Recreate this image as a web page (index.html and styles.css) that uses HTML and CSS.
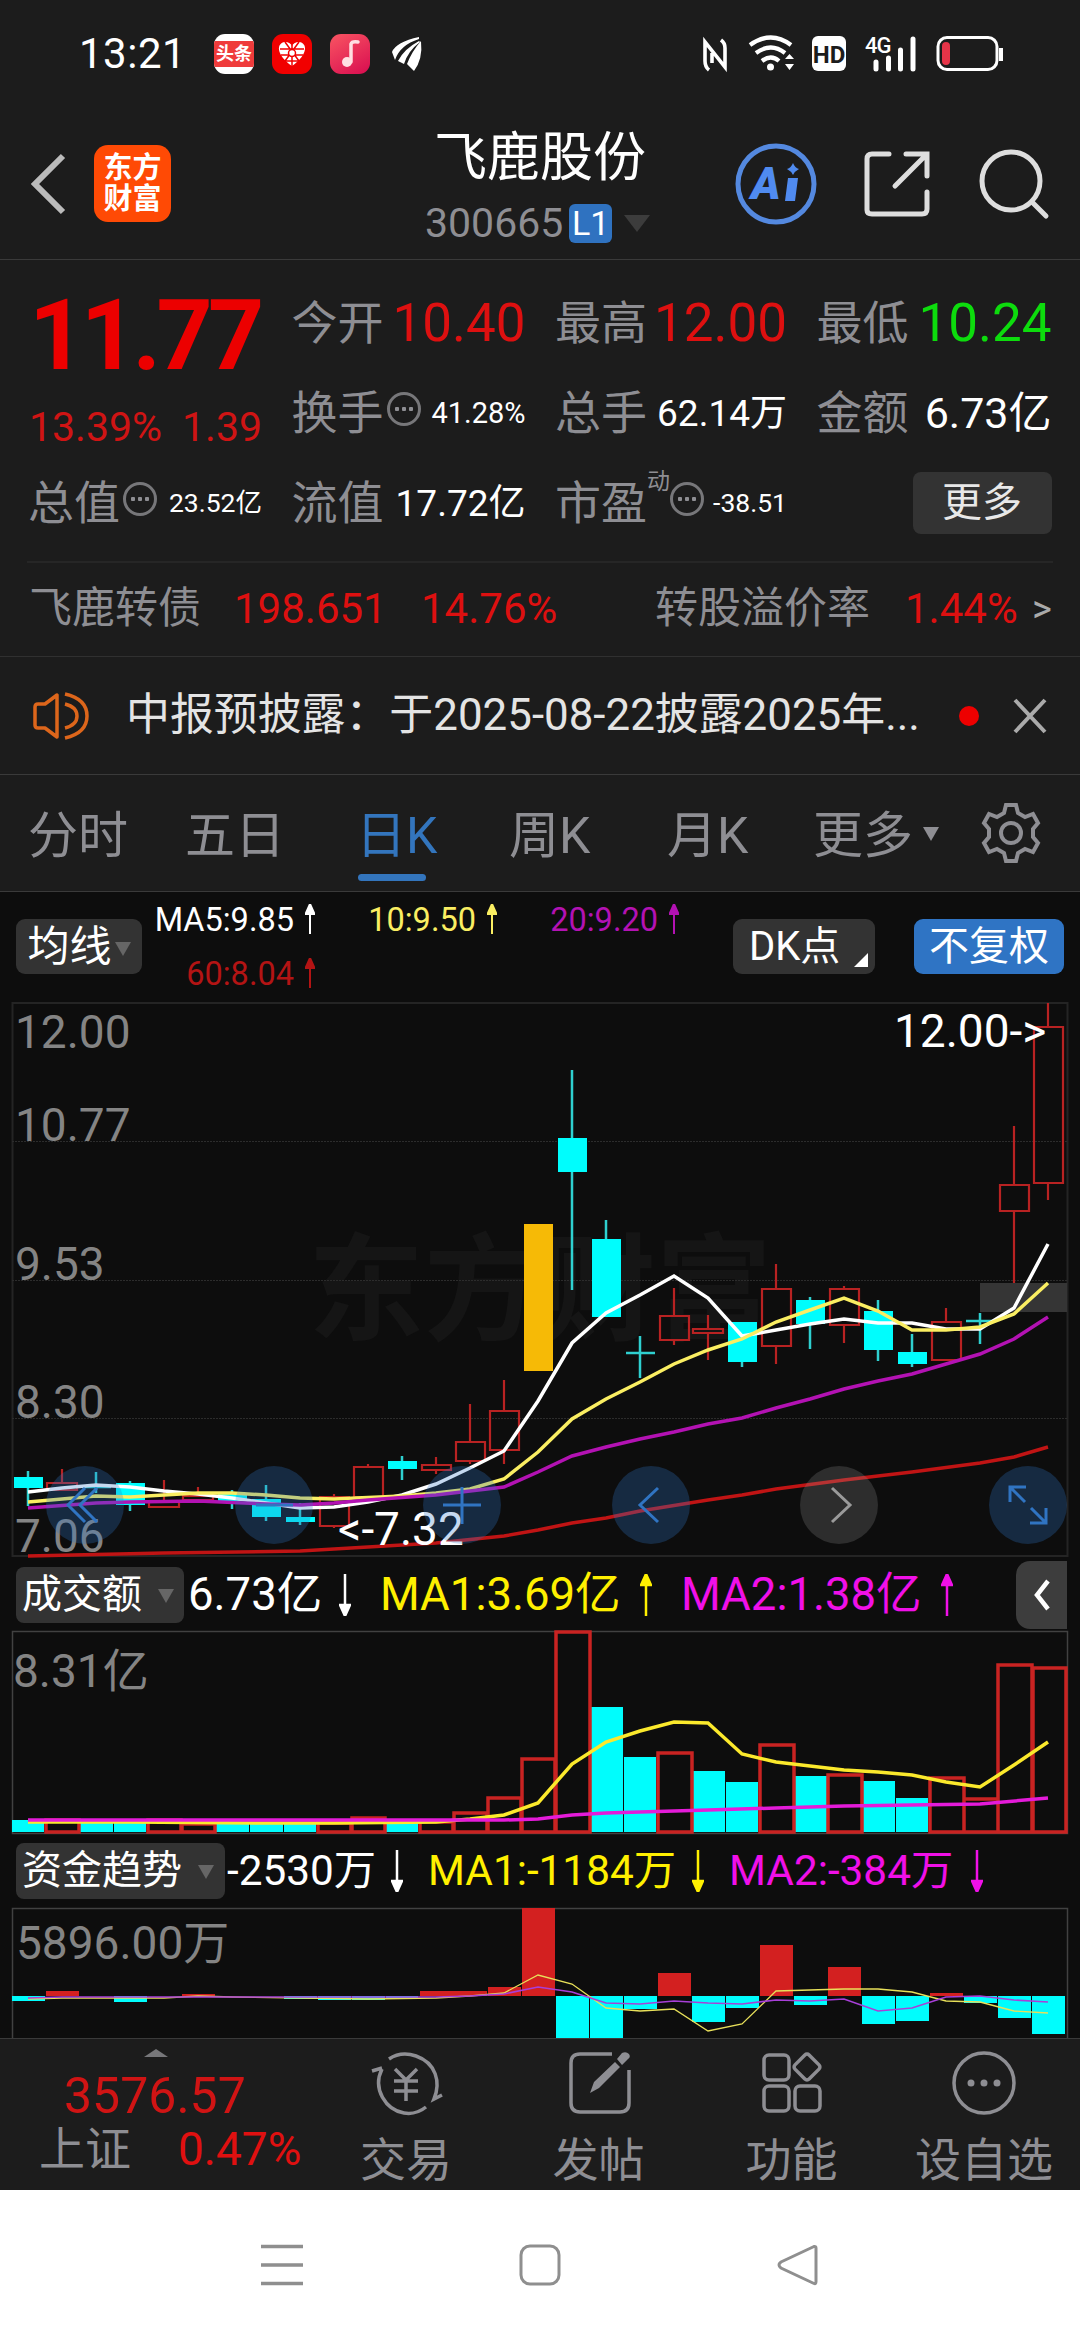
FILE: index.html
```html
<!DOCTYPE html>
<html lang="zh-CN">
<head>
<meta charset="utf-8">
<meta name="viewport" content="width=1080">
<title>飞鹿股份 300665</title>
<link rel="stylesheet" href="styles.css">
</head>
<body>
<div class="status">
<span class="clock">13:21</span>
<span class="app toutiao"><b>头条</b></span>
<span class="app heart"><svg width="40" height="40" viewBox="0 0 40 40"><path d="M20 32C4 21 4 9 13 8q5 0 7 4 2-4 7-4c9 1 9 13-7 24z" fill="#fff"/><path d="M8 15h24M9 21h22M13 8l14 19M27 8L13 27M20 11v21M14 27h12" stroke="#f10000" stroke-width="1.5" fill="none"/><circle cx="20" cy="19" r="3.5" fill="#fff" stroke="#f10000" stroke-width="1.5"/></svg></span>
<span class="app music"><svg width="40" height="40" viewBox="0 0 40 40"><path d="M21 28V10q1-3 7-2" fill="none" stroke="#ffdfe2" stroke-width="3.5" stroke-linecap="round"/><ellipse cx="17" cy="28" rx="5" ry="5" fill="#ffdfe2"/></svg></span>
<svg class="bird" width="32" height="34" viewBox="0 0 32 34"><path d="M27 0Q4 5 0 15l3 8Q8 8 27 2zM27 4Q12 12 6 24l6 3Q16 14 28 5zM29 4Q20 14 15 27l7 7Q31 22 29 4z" fill="#fff"/></svg>
<svg class="signals" width="300" height="36" viewBox="0 0 300 36" fill="none">
<path d="M9 34Q5 31 5 25V6l20 25V12q0-5-4-8M12 27V17" stroke="#fff" stroke-width="3.6"/>
<g stroke="#fff" stroke-width="4.3"><path d="M50 9q21-15 41 0M56 17q15-11 29 0M62 25q9-7 17 0"/></g>
<circle cx="70.500" cy="31" r="3.500" fill="#fff"/><path d="M85 23l4.500-5 4.500 5zM85 28l4.500 6 4.500-6z" fill="#fff"/>
<rect x="112" y="0" width="34" height="35" rx="6" fill="#fff"/><text class="hd" x="129" y="27" text-anchor="middle">HD</text>
<text class="fourg" x="165" y="17">4G</text>
<path d="M176 26v7M188.500 22v11M200.500 14v19M213 3v30" stroke="#fff" stroke-width="5" stroke-linecap="round"/>
<rect x="238" y="1.500" width="59" height="32" rx="9" stroke="#fff" stroke-width="3"/>
<rect x="242" y="6" width="8" height="23" rx="4" fill="#e63448"/>
</svg><i class="cap"></i>
</div>

<header>
<svg class="back" width="38" height="64" viewBox="0 0 38 64"><path d="M34 4L6 32l28 28" fill="none" stroke="#bbb" stroke-width="6"/></svg>
<div class="logo">东方<br>财富</div>
<div class="name">
<h1>飞鹿股份</h1>
<p>300665<span class="lv">L1</span><i class="down"></i></p>
</div>
<svg class="tools" width="316" height="84" viewBox="0 0 316 84" fill="none">
<circle cx="41" cy="42" r="38" stroke="#5489e0" stroke-width="5"/>
<text class="ai" x="16" y="57">A</text>
<path d="M53 36h10l-3 23H50zM58 21q2 5 6 6-4 2-6 6-2-4-6-6 4-1 6-6z" fill="#508bf0"/>
<path d="M154 12h-17q-5 0-5 5v51q0 4 5 4h50q5 0 5-5V50M171 12h21v22M190 14l-30 30" stroke="#dedede" stroke-width="5" stroke-linecap="round"/>
<circle cx="276" cy="39" r="29" stroke="#dedede" stroke-width="5"/><path d="M297 60l14 14" stroke="#dedede" stroke-width="5" stroke-linecap="round"/>
</svg>
</header>

<section class="quote">
<div class="price"><strong>11.77</strong><p><span>13.39%</span><span>1.39</span></p></div>
<div class="cell"><label>今开</label><span class="v lg red">10.40</span></div>
<div class="cell"><label>最高</label><span class="v lg red">12.00</span></div>
<div class="cell"><label>最低</label><span class="v lg green">10.24</span></div>
<div class="cell"><label>换手</label><i class="tip"></i><span class="v xs">41.28%</span></div>
<div class="cell"><label>总手</label><span class="v">62.14万</span></div>
<div class="cell"><label>金额</label><span class="v md">6.73亿</span></div>
<div class="cell"><label>总值</label><i class="tip"></i><span class="v xxs">23.52亿</span></div>
<div class="cell"><label>流值</label><span class="v">17.72亿</span></div>
<div class="cell"><label>市盈</label><sup>动</sup><i class="tip"></i><span class="v xxs">-38.51</span></div>
<div class="cell end"><button>更多</button></div>
</section>

<section class="bond">
<span class="b1">飞鹿转债</span><span class="b2 red">198.651</span><span class="b3 red">14.76%</span><span class="b4">转股溢价率</span><span class="b5 red">1.44%</span><span>&gt;</span>
</section>

<section class="notice">
<svg width="60" height="50" viewBox="0 0 60 50" fill="none" stroke="#dd661b" stroke-width="3.500"><path d="M27 4v42L15 37H8q-3 0-3-3V16q0-3 3-3h7z" stroke-linejoin="round"/><path d="M35 3q22 5 22 22T35 47M35 13q12 3 12 12T35 37"/></svg>
<p>中报预披露：于2025-08-22披露2025年...</p>
<i class="dot"></i>
<svg width="34" height="36" viewBox="0 0 34 36"><path d="M2 2l30 32M32 2L2 34" stroke="#aaa" stroke-width="4"/></svg>
</section>

<nav class="tabs">
<a>分时</a><a>五日</a><a class="on">日K</a><a>周K</a><a>月K</a><a>更多<i class="down"></i></a>
<svg width="60" height="60" viewBox="0 0 60 60" fill="none" stroke="#8e8e93" stroke-width="4"><path d="M25 2h10l2 8 7 4 8-3 5 9-5 6v8l5 6-5 9-8-3-7 4-2 8H25l-2-8-7-4-8 3-5-9 5-6v-8l-5-6 5-9 8 3 7-4z"/><circle cx="30" cy="30" r="10"/></svg>
</nav>

<section class="legend">
<button class="ma">均线<i class="down"></i></button>
<div class="avgs">
<span>MA5:9.85<svg width="10" height="30"><use href="#up"/></svg></span>
<span class="yellow">10:9.50<svg width="10" height="30"><use href="#up"/></svg></span>
<span class="purple">20:9.20<svg width="10" height="30"><use href="#up"/></svg></span>
<span class="dred">60:8.04<svg width="10" height="30"><use href="#up"/></svg></span>
</div>
<button class="dk">DK点<i class="corner"></i></button>
<button class="adj">不复权</button>
</section>

<svg class="chart" width="1080" height="568" viewBox="0 994 1080 568" fill="none">
<defs>
<path id="up" d="M5 30V8M0.500 10L5 0l4.500 10z" fill="currentColor" stroke="currentColor" stroke-width="2"/>
<path id="dn" d="M6 0v34M1 31l5 11 5-11z" fill="currentColor" stroke="currentColor" stroke-width="2.500"/>
<path id="upl" d="M6 42V8M1 11L6 0l5 11z" fill="currentColor" stroke="currentColor" stroke-width="2.500"/>
</defs>
<text class="mark" x="308" y="1331">东方财富</text>
<rect x="12.500" y="1003" width="1055" height="553" stroke="#242424" stroke-width="2"/>
<path d="M12 1141.500H1067M12 1280.500H1067M12 1418.500H1067" stroke="#2c2c2c" stroke-dasharray="2 1"/>
<rect x="980" y="1283" width="87" height="29" fill="#353535"/>
<!-- price scale -->
<g class="scale"><text x="15" y="1048">12.00</text><text x="15" y="1141">10.77</text><text x="15" y="1280">9.53</text><text x="15" y="1418">8.30</text><text x="15" y="1552">7.06</text></g>
<!-- candles -->
<rect x="524" y="1224" width="29" height="147" fill="#f6ba06"/>
<path class="rise" d="M62 1469v14m-15 0h30v7h-30zM164 1480v22m-15 0h30v5h-30zM198 1487v9m-15 0h30v4h-30zM334 1494v3m-14 0h29v29h-29zm14 29v2M368 1464v3m-14 0h29v30h-29zM436 1457v8m-14 0h29v5h-29zm14 5v4M470 1404v38m-14 0h29v19h-29zm14 19v3M504 1380v31m-14 0h29v39h-29zm14 39v14M674 1288v28m-14 0h29v24h-29zm14 24v5M708 1315v14m-15 0h30v4h-30zm15 4v27M776 1264v25m-14 0h29v57h-29zm14 57v18M844 1286v3m-14 0h29v36h-29zm14 36v18M946 1308v14m-14 0h29v38h-29zM1014 1126v59m-14 0h29v26h-29zm14 26v72M1048 1003v24m-14 0h29v156h-29zm14 156v17"/>
<path class="fall" d="M28 1471v35M96 1472v21M130 1481v30M232 1490v19M266 1485v36M300 1503v22M402 1456v24M572 1070v220M606 1220v97M640 1336v42m-14-25h29M742 1322v45M810 1297v52M878 1300v61M912 1334v33M980 1313v31m-14-23h29M82 1487h29"/>
<path fill="#00fdfd" d="M14 1477h29v11H14zM116 1483h29v22h-29zM218 1493h29v8h-29zM252 1499h29v18h-29zM286 1517h29v5h-29zM388 1461h29v8h-29zM558 1138h29v34h-29zM592 1239h29v78h-29zM728 1322h29v40h-29zM796 1300h29v24h-29zM864 1311h29v39h-29zM898 1352h29v12h-29z"/>
<!-- moving averages -->
<g stroke-width="3.500">
<polyline stroke="#c01414" points="28,1556 164,1553 300,1551 368,1547 436,1543 504,1536 538,1530 572,1523 606,1518 640,1511 708,1500 742,1495 776,1489 844,1480 912,1472 980,1463 1014,1457 1048,1447"/>
<polyline stroke="#fff" points="28,1492 62,1488 96,1485 130,1487 164,1491 198,1494 232,1498 266,1503 300,1508 334,1507 368,1502 402,1495 436,1484 470,1468 504,1451 538,1401 572,1343 606,1313 640,1295 674,1276 708,1298 742,1336 776,1330 810,1324 844,1319 878,1323 912,1323 946,1329 980,1329 1014,1308 1048,1244"/>
<polyline stroke="#faee62" points="28,1502 96,1496 130,1497 198,1493 232,1493 266,1495 300,1498 334,1499 402,1496 436,1493 470,1489 504,1479 538,1452 572,1419 606,1399 640,1382 674,1364 708,1350 742,1339 776,1322 810,1310 844,1298 878,1311 912,1330 946,1330 980,1327 1014,1314 1048,1283"/>
<polyline stroke="#b312b3" points="28,1508 96,1503 130,1502 198,1501 266,1504 300,1505 334,1503 368,1500 436,1495 504,1487 538,1472 572,1456 606,1447 640,1439 674,1432 708,1424 742,1418 776,1408 810,1399 844,1389 878,1381 912,1374 946,1364 980,1354 1014,1339 1048,1317"/>
</g>
<g class="peak"><text x="894" y="1047">12.00-&gt;</text><text x="338" y="1545">&lt;-7.32</text></g>
<!-- floating controls -->
<g fill="#3078c8" fill-opacity=".28"><circle cx="85" cy="1505" r="39"/><circle cx="274" cy="1505" r="39"/><circle cx="462" cy="1505" r="39"/><circle cx="651" cy="1505" r="39"/><circle cx="1028" cy="1505" r="39"/></g>
<circle cx="839" cy="1505" r="39" fill="#999" fill-opacity=".23"/>
<path stroke="#3074c2" stroke-width="3" d="M85 1488l-17 17 17 17M97 1488l-17 17 17 17M256 1505h37M443 1505h38M462 1487v37M658 1488l-18 17 18 17M1010 1502v-15h16M1010 1487l15 15M1046 1508v15h-16M1046 1523l-15-15"/>
<path stroke="#9a9a9a" stroke-width="3" d="M832 1488l18 17-18 17"/>
</svg>

<section class="ind">
<button>成交额<i class="down"></i></button>
<span class="cur">6.73亿</span><svg width="12" height="42"><use href="#dn"/></svg>
<span class="yel m1">MA1:3.69亿</span><svg class="yel" width="12" height="42"><use href="#upl"/></svg>
<span class="mag m2">MA2:1.38亿</span><svg class="mag" width="12" height="42"><use href="#upl"/></svg>
<span class="side"><svg width="18" height="32" viewBox="0 0 18 32"><path d="M15 2L4 16l11 14" fill="none" stroke="#fff" stroke-width="4.500"/></svg></span>
</section>

<svg class="chart" width="1080" height="210" viewBox="0 1628 1080 210" fill="none">
<rect x="12.500" y="1631.500" width="1055" height="202" stroke="#414141" stroke-width="1.500"/>
<g class="scale"><text x="13" y="1687">8.31亿</text></g>
<path fill="#00fdfd" d="M12 1820h32v12H12zM80 1823h33v9H80zM114 1823h32v9h-32zM216 1824h33v8h-33zM250 1823h33v9h-33zM284 1823h32v9h-32zM386 1823h32v9h-32zM591 1707h32v125h-32zM624 1757h32v75h-32zM692 1771h33v61h-33zM726 1782h32v50h-32zM794 1776h33v56h-33zM862 1781h33v51h-33zM896 1798h32v34h-32z"/>
<path stroke="#c92322" stroke-width="3.500" d="M46 1820h33v12H46zM148 1820h33v12h-33zM182 1824h33v8h-33zM318 1823h33v9h-33zM352 1818h33v14h-33zM420 1822h33v10h-33zM454 1813h33v19h-33zM488 1798h33v34h-33zM522 1759h33v73h-33zM556 1632h34v200h-34zM658 1753h34v79h-34zM760 1745h34v87h-34zM828 1775h34v57h-34zM930 1778h34v54h-34zM964 1799h34v33h-34zM998 1665h34v167h-34zM1033 1668h33v164h-33z"/>
<polyline stroke="#fbe92c" stroke-width="3.500" points="28,1822 130,1822 266,1823 334,1823 436,1822 470,1819 504,1815 538,1803 572,1764 606,1742 640,1731 674,1722 708,1723 742,1754 776,1762 810,1766 844,1770 878,1772 912,1775 946,1782 980,1787 1014,1765 1048,1742"/>
<polyline stroke="#e41bd9" stroke-width="3.500" points="28,1820 504,1820 538,1819 572,1815 606,1813 640,1812 708,1810 776,1808 844,1806 912,1805 980,1804 1048,1798"/>
</svg>

<section class="ind fund">
<button>资金趋势<i class="down"></i></button>
<span class="cur">-2530万</span><svg width="12" height="42"><use href="#dn"/></svg>
<span class="yel m1">MA1:-1184万</span><svg class="yel" width="12" height="42"><use href="#dn"/></svg>
<span class="mag m2">MA2:-384万</span><svg class="mag" width="12" height="42"><use href="#dn"/></svg>
</section>

<svg class="chart" width="1080" height="134" viewBox="0 1904 1080 134" fill="none">
<path d="M12.500 2038V1908.500H1067.500V2038" stroke="#414141" stroke-width="1.500"/>
<g class="scale"><text x="16" y="1959">5896.00万</text></g>
<path fill="#d32020" d="M46 1991h33v5H46zM182 1994h33v2h-33zM420 1991h67v5h-67zM488 1987h33v9h-33zM522 1908h33v88h-33zM658 1973h33v23h-33zM760 1945h33v51h-33zM828 1967h33v29h-33zM930 1993h33v3h-33z"/>
<path fill="#00fdfd" d="M12 1996h33v5H12zM114 1996h33v6h-33zM284 1996h33v3h-33zM318 1996h33v4h-33zM352 1996h33v4h-33zM386 1996h32v2h-32zM556 1996h33v42h-33zM590 1996h33v42h-33zM624 1996h33v13h-33zM692 1996h33v26h-33zM726 1996h33v12h-33zM794 1996h33v9h-33zM862 1996h33v28h-33zM896 1996h33v25h-33zM964 1996h33v7h-33zM998 1996h33v22h-33zM1032 1996h33v38h-33z"/>
<polyline stroke="#e8e05a" stroke-width="1.300" points="28,1999 62,1998 164,1998 198,1996 232,1997 368,1999 436,1998 470,1996 504,1993 538,1975 572,1984 606,2008 640,2011 674,2009 708,2031 742,2024 776,1991 844,1989 878,1989 912,1992 946,2001 980,2002 1014,2011 1048,2013"/>
<polyline stroke="#a83fd8" stroke-width="1.600" points="28,1998 62,1997 436,1997 470,1996 504,1994 538,1987 572,1992 606,2003 640,2004 674,2001 708,2003 742,2004 776,2000 810,2001 844,1999 878,2011 912,2008 946,1997 980,1996 1014,2000 1048,2002"/>
</svg>

<footer>
<div class="index"><i class="tri"></i><strong>3576.57</strong><p>上证<span class="red">0.47%</span></p></div>
<div class="act"><svg width="76" height="68" viewBox="0 0 76 68" fill="none" stroke="#8e8e93" stroke-width="3.500"><path d="M21 10q12-8 27-3c20 7 25 26 18 43l8-4M14 20C4 40 18 61 36 64q12 2 22-6M4 22l10-3M27 20l11 11 11-11M38 31v21M26 32h24M26 42h24"/></svg>交易</div>
<div class="act"><svg width="76" height="68" viewBox="0 0 76 68"><path d="M51 5H19q-9 0-9 9v40q0 9 9 9h40q9 0 9-9V21" fill="none" stroke="#8e8e93" stroke-width="3.500"/><path d="M29 44l4-11 21-20 5 5-21 21zM56 10l5-6q4-2 7 1 2 3-1 5l-6 6z" fill="#8e8e93"/></svg>发帖</div>
<div class="act"><svg width="76" height="68" viewBox="0 0 76 68" fill="none" stroke="#8e8e93" stroke-width="3.500"><rect x="10" y="6" width="25" height="25" rx="5"/><rect x="10" y="37" width="25" height="25" rx="5"/><rect x="41" y="37" width="25" height="25" rx="5"/><rect x="43" y="8" width="20" height="20" rx="3" transform="rotate(45 53 18)"/></svg>功能</div>
<div class="act wide"><svg width="76" height="68" viewBox="0 0 76 68"><circle cx="38" cy="34" r="30" fill="none" stroke="#8e8e93" stroke-width="3.500"/><g fill="#8e8e93"><circle cx="25" cy="34" r="3.500"/><circle cx="38" cy="34" r="3.500"/><circle cx="51" cy="34" r="3.500"/></g></svg>设自选</div>
</footer>

<div class="sysnav">
<svg width="42" height="42" viewBox="0 0 42 42"><path d="M0 2.500h42M0 21h42M0 39.500h42" stroke="#8f8f8f" stroke-width="3.500"/></svg>
<svg width="42" height="42" viewBox="0 0 42 42"><rect x="2" y="2" width="38" height="38" rx="9" fill="none" stroke="#8f8f8f" stroke-width="3"/></svg>
<svg width="42" height="42" viewBox="0 0 42 42"><path d="M37 2.500L4 18q-4 3 0 6l33 15.500q2 1 2-2V4q0-2-2-1.500z" fill="none" stroke="#8f8f8f" stroke-width="3"/></svg>
</div>
</body>
</html>
```
FILE: styles.css
```css
* {
 box-sizing: border-box;
}
body {
 margin: 0;
 width: 1080px;
 height: 2340px;
 overflow: hidden;
 background: #0d0d0d;
 color: #8e8e93;
 font-family: Roboto, "Noto Sans CJK SC", sans-serif;
 font-size: 42px;
 line-height: 1;
}
h1, p {
 margin: 0;
 font-weight: normal;
}
svg {
 display: block;
 flex: none;
}
button {
 border: 0;
 padding: 0;
 color: #fff;
 background: #333;
 border-radius: 8px;
 font: inherit;
 line-height: 1;
 white-space: nowrap;
}
.red { color: #e01010; }
.green { color: #0ddc0d; }
.down {
 display: inline-block;
 border: 8px solid transparent;
 border-top: 14px solid #666;
 border-bottom: 0;
}

/* status bar */
.status {
 display: flex;
 align-items: center;
 height: 108px;
 padding-left: 79px;
 background: #1c1c1c;
 color: #fff;
}
.clock {
 width: 135px;
 font-size: 42px;
 letter-spacing: 0.5px;
}
.app {
 display: flex;
 align-items: center;
 width: 40px;
 height: 40px;
 margin-right: 18px;
 border-radius: 11px;
 overflow: hidden;
}
.toutiao {
 background: #fff;
 font-size: 18px;
}
.toutiao b {
 width: 40px;
 padding: 4px 0;
 background: #ef3b3b;
 text-align: center;
}
.heart { background: #f10000; }
.music { background: linear-gradient(150deg, #f95562, #d80c50); }
.bird { margin-left: 4px; }
.signals {
 margin-left: 276px;
 overflow: visible;
}
.cap {
 width: 4px;
 height: 13px;
 margin-left: -1px;
 background: #fff;
}
.hd {
 font-size: 24px;
 font-weight: bold;
 fill: #1c1c1c;
}
.fourg {
 font-size: 22px;
 font-weight: 500;
 fill: #fff;
 letter-spacing: -1px;
}

/* title */
header {
 display: flex;
 align-items: center;
 height: 152px;
 padding-left: 29px;
 background: #1c1c1c;
 border-bottom: 1px solid #3a3a3a;
}
.logo {
 width: 77px;
 height: 77px;
 margin-left: 27px;
 padding-top: 8px;
 border-radius: 14px;
 background: #ff4a05;
 color: #fff;
 font-size: 29px;
 font-weight: bold;
 line-height: 31px;
 text-align: center;
}
.name {
 width: 300px;
 margin-left: 254px;
}
h1 {
 margin: 8px 0 0 9px;
 color: #fff;
 font-size: 53px;
}
.name p {
 display: flex;
 align-items: center;
 height: 40px;
 margin-top: 18px;
 font-size: 41px;
}
.lv {
 width: 43px;
 height: 39px;
 margin: 0 12px 0 6px;
 border-radius: 6px;
 background: #2f72c0;
 color: #fff;
 font-size: 34px;
 line-height: 39px;
 text-align: center;
}
.name .down {
 border-width: 17px 13px 0;
 border-top-color: #3c3c3c;
}
.tools { margin-left: 10px; }
.ai {
 font-size: 45px;
 font-weight: 900;
 font-style: italic;
 fill: #508bf0;
}

/* quote figures */
.quote {
 display: grid;
 grid-template-columns: 233px 233px 231px 234px;
 grid-template-rows: repeat(3, 90px);
 column-gap: 30.5px;
 height: 301px;
 padding: 18px 0 0 29px;
 background: #1c1c1c;
}
.price {
 grid-row: span 2;
 color: #ec0000;
}
.price strong {
 display: block;
 margin-top: 9px;
 font-size: 98px;
 letter-spacing: -4.5px;
}
.price p {
 display: flex;
 justify-content: space-between;
 margin-top: 22px;
 font-size: 41px;
 color: #d01414;
}
.cell {
 display: flex;
 align-items: center;
}
.cell label {
 margin-left: -1px;
 font-size: 46px;
}
.v {
 margin-left: auto;
 color: #fff;
 font-size: 37px;
}
.v.lg { font-size: 53px; }
.v.md { font-size: 43px; }
.v.xs { font-size: 29px; }
.v.xxs { font-size: 26.5px; }
.v.red { color: #dd1010; }
.v.green { color: #0ddc0d; }
.tip {
 width: 34px;
 height: 34px;
 margin: -8px 0 0 3px;
 border: 3px solid #77777a;
 border-radius: 50%;
 background: radial-gradient(circle at 7px 14px, #8e8e93 2px, transparent 2.5px), radial-gradient(circle at 14px 14px, #8e8e93 2px, transparent 2.5px), radial-gradient(circle at 21px 14px, #8e8e93 2px, transparent 2.5px);
}
.cell sup {
 margin: -44px -3px 0 0;
 font-size: 23px;
 line-height: 1;
}
.end { justify-content: flex-end; }
.end button {
 width: 139px;
 height: 62px;
 color: #e8e8e8;
 font-size: 40px;
}

.bond {
 display: grid;
 grid-template-columns: 205px 187px 234px 250px 127px 30px;
 align-items: center;
 height: 95px;
 padding-left: 29px;
 background: linear-gradient(#262626, #262626) 27px 0 / 1026px 2px no-repeat #1c1c1c;
 font-size: 43px;
}
.bond .red {
 font-size: 42px;
 color: #dd1010;
}
.bond span:last-child {
 color: #aaa;
 font-size: 38px;
}

.notice {
 display: flex;
 align-items: center;
 height: 118px;
 padding-left: 30px;
 border-top: 1px solid #303030;
 background: #1c1c1c;
}
.notice p {
 width: 829px;
 margin-left: 36px;
 color: #e4e4e4;
 font-size: 43.9px;
 white-space: nowrap;
}
.dot {
 width: 20px;
 height: 20px;
 margin: 0 34px 0 4px;
 border-radius: 50%;
 background: #ee0000;
}

.tabs {
 display: grid;
 grid-template-columns: 157px 171px 153px 158px 146px 168px 60px;
 align-items: center;
 height: 118px;
 padding-left: 28px;
 border-top: 1px solid #3a3a3a;
 border-bottom: 1px solid #3a3a3a;
 background: #1c1c1c;
 font-size: 50px;
}
.tabs a {
 display: flex;
 flex-direction: column;
 justify-content: center;
 height: 116px;
 padding-top: 5px;
 white-space: nowrap;
}
.tabs .on {
 padding-top: 25px;
 color: #3375bd;
}
.tabs .on::after {
 content: "";
 width: 68px;
 height: 7px;
 margin: 13px 0 0 2px;
 border-radius: 4px;
 background: #3375bd;
}
.tabs a:nth-child(6) {
 flex-direction: row;
 align-items: center;
 justify-content: flex-start;
}
.tabs .down {
 margin: 0 0 4px 10px;
 border-top-color: #8e8e93;
}

/* averages above the main chart */
.legend {
 display: flex;
 height: 102px;
 padding: 27px 16px 0;
}
.legend button {
 height: 55px;
 border-radius: 9px;
}
.legend .ma {
 width: 126px;
 font-size: 42px;
}
.ma .down { margin-left: 3px; margin-bottom: 5px; }
.avgs {
 display: grid;
 grid-template-columns: 173px 182px 182px;
 grid-template-rows: 54px 54px;
 width: 591px;
 margin: -15px 0 0;
 color: #fff;
 font-size: 32.5px;
}
.avgs span {
 display: flex;
 justify-content: flex-end;
 gap: 11px;
 height: 33px;
}
.avgs .yellow { color: #faee62; }
.avgs .purple { color: #b312b3; }
.avgs .dred { color: #b31414; }
.legend .dk {
 display: flex;
 align-items: center;
 width: 142px;
 padding-left: 16px;
 font-size: 40px;
}
.corner {
 align-self: flex-end;
 margin: 0 0 7px 14px;
 border-left: 14px solid transparent;
 border-bottom: 14px solid #fff;
}
.legend .adj {
 width: 150px;
 margin-left: 39px;
 background: #2f74c4;
 font-size: 40px;
}

.rise {
 stroke: #b82222;
 stroke-width: 2.2px;
}
.fall {
 stroke: #2fd0d0;
 stroke-width: 2.5px;
}
.scale {
 fill: #848484;
 font-size: 46px;
}
.peak {
 fill: #fff;
 font-size: 46px;
}
.mark {
 fill: #151515;
 font-size: 116px;
 font-weight: 700;
}

/* sub charts */
.ind {
 display: flex;
 align-items: center;
 height: 66px;
 padding-left: 16px;
 color: #fff;
 font-size: 45.5px;
 white-space: nowrap;
}
.ind button {
 width: 168px;
 height: 56px;
 margin-right: 4px;
 padding-left: 6px;
 font-size: 40px;
 text-align: left;
}
.ind .down { margin: 0 0 5px 16px; }
.ind .cur { width: 151px; }
.ind .m1 { width: 260px; margin-left: 29px; }
.ind .m2 { width: 260px; margin-left: 29px; }
.yel { color: #fff000; }
.mag { color: #f010e8; }
.side {
 display: flex;
 align-items: center;
 justify-content: center;
 width: 51px;
 height: 68px;
 margin-left: 63px;
 border-radius: 14px 0 0 14px;
 background: #3d3d3d;
}
.fund { font-size: 42.3px; }
.fund button {
 width: 209px;
 margin-right: 2px;
}
.fund .cur { width: 164px; }
.fund .m1 { width: 264px; margin-left: 25px; }
.fund .m2 { width: 242px; margin-left: 25px; }

/* bottom bar */
footer {
 display: grid;
 grid-template-columns: 310px 192px 193px 193px 192px;
 height: 152px;
 border-top: 1px solid #3a3a3a;
 background: #1c1c1c;
 font-size: 46px;
}
.index {
 padding: 10px 0 0 39px;
}
.tri {
 display: block;
 width: 24px;
 margin-left: 105px;
 border: 12px solid transparent;
 border-top: 0;
 border-bottom: 8px solid #77777a;
}
.index strong {
 display: block;
 margin: 14px 0 0 25px;
 color: #d01414;
 font-size: 50px;
 font-weight: normal;
}
.index p { margin-top: 5px; }
.index span {
 margin-left: 47px;
 font-size: 46px;
}
.act {
 display: flex;
 flex-direction: column;
 align-items: center;
 padding-top: 10px;
}
.act svg { margin-bottom: 20px; }

.sysnav {
 display: flex;
 justify-content: center;
 gap: 216px;
 height: 150px;
 padding-top: 54px;
 background: #fff;
}
```
